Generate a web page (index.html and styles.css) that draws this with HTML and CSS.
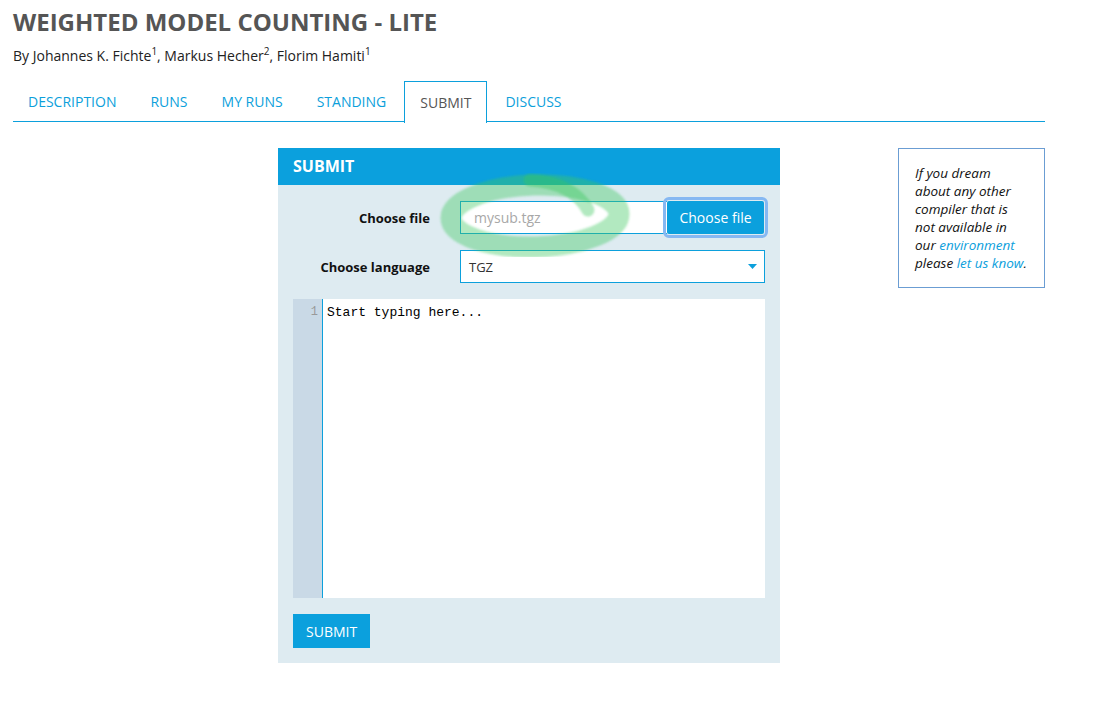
FILE: index.html
```html
<!DOCTYPE html>
<html>
<head>
<meta charset="utf-8">
<title>Weighted Model Counting - Lite</title>
<link rel="stylesheet" href="styles.css">
</head>
<body>
<div class="page">
  <h1 class="title">WEIGHTED MODEL COUNTING - LITE</h1>
  <p class="authors">By Johannes K. Fichte<sup>1</sup>, Markus Hecher<sup>2</sup>, Florim Hamiti<sup>1</sup></p>
  <nav class="tabs">
    <a class="tab">DESCRIPTION</a>
    <a class="tab">RUNS</a>
    <a class="tab">MY RUNS</a>
    <a class="tab">STANDING</a>
    <a class="tab active">SUBMIT</a>
    <a class="tab">DISCUSS</a>
  </nav>
  <div class="content">
    <section class="panel">
      <div class="panel-head">SUBMIT</div>
      <div class="panel-body">
        <div class="row">
          <label class="label">Choose file</label>
          <div class="file">
            <span class="file-name">mysub.tgz</span>
            <span class="file-btn">Choose file</span>
          </div>
        </div>
        <div class="row">
          <label class="label">Choose language</label>
          <div class="select">
            <span>TGZ</span>
            <svg class="caret" width="9" height="5" viewBox="0 0 9 5"><path d="M0 0H9L4.5 5Z" fill="#0ca0dc"/></svg>
          </div>
        </div>
        <div class="editor">
          <div class="gutter"><span>1</span></div>
          <div class="code">Start typing here...</div>
        </div>
        <div class="actions"><button class="submit">SUBMIT</button></div>
      </div>
      <svg class="marker" width="220" height="110" viewBox="0 0 220 110">
        <defs><filter id="soft" x="-10%" y="-10%" width="120%" height="120%"><feGaussianBlur stdDeviation="0.8"/></filter></defs>
        <g filter="url(#soft)" fill="none" stroke="rgb(60,200,95)" stroke-opacity="0.4">
          <ellipse cx="105" cy="56" rx="84" ry="31" stroke-width="21" transform="rotate(-1.5 105 56)"/>
          <path d="M100 20 C128 22 148 32 158 50" stroke-width="13" stroke-linecap="round"/>
        </g>
      </svg>
    </section>
    <aside class="note">
      <p><em>If you dream about any other compiler that is not available in our <a class="link">environment</a> please <a class="link">let us know</a>.</em></p>
    </aside>
  </div>
</div>
</body>
</html>
```

FILE: styles.css
```css
* { box-sizing: border-box; }
html, body { margin: 0; padding: 0; background: #fff; }
body {
  font-family: "Open Sans", "Liberation Sans", sans-serif;
  color: #222;
}
.page {
  width: 1032px;
  margin-left: 13px;
}
.title {
  margin: 0;
  padding-top: 8px;
  font-size: 24px;
  line-height: 28px;
  font-weight: 700;
  color: #555;
}
.authors {
  margin: 11px 0 0;
  font-size: 14px;
  line-height: 18px;
  color: #222;
}
.authors sup {
  font-size: 10px;
  line-height: 0;
  vertical-align: 6px;
}
.tabs {
  display: flex;
  margin-top: 15px;
  border-bottom: 1px solid #0ca0dc;
  height: 42px;
}
.tab {
  display: flex;
  align-items: center;
  height: 42px;
  padding: 0 15px;
  border: 1px solid transparent;
  border-bottom: none;
  margin-right: 2px;
  font-size: 14px;
  color: #0c9fdb;
  cursor: pointer;
}
.tab:first-child { margin-left: -1px; }
.tab.active {
  border-color: #0ca0dc;
  background: #fff;
  color: #555;
  height: 42px;
  position: relative;
  top: 1px;
}
.content {
  display: flex;
  align-items: flex-start;
  margin-top: 26px;
  padding-left: 265px;
}
.panel {
  position: relative;
  width: 502px;
  background: #deebf1;
}
.panel-head {
  height: 37px;
  background: #0ba0dd;
  color: #fff;
  font-weight: 700;
  font-size: 16px;
  line-height: 37px;
  padding-left: 15px;
}
.panel-body {
  padding: 16px 15px 15px;
  display: flex;
  flex-direction: column;
  gap: 16px;
}
.row {
  display: flex;
  align-items: center;
  height: 33px;
}
.label {
  width: 167px;
  padding-right: 30px;
  text-align: right;
  font-weight: 700;
  font-size: 13px;
  color: #111;
}
.file {
  display: flex;
  width: 304px;
  height: 33px;
}
.file-name {
  flex: 1;
  background: #fff;
  border: 1px solid #0ca0dc;
  border-right: none;
  padding-left: 13px;
  font-size: 14px;
  line-height: 31px;
  color: #a8a8a8;
}
.file-btn {
  width: 97px;
  height: 33px;
  background: #0ba0dd;
  color: #fff;
  font-size: 14px;
  line-height: 33px;
  text-align: center;
  outline: 3px solid #86b8f2;
  outline-offset: 1px;
  border-radius: 2px;
}
.select {
  display: flex;
  align-items: center;
  justify-content: space-between;
  width: 305px;
  height: 33px;
  background: #fff;
  border: 1px solid #0ca0dc;
  padding: 0 7px 0 8px;
  font-size: 13px;
  color: #333;
}
.caret { display: block; }
.editor {
  display: flex;
  width: 472px;
  height: 299px;
  background: #fff;
}
.gutter {
  width: 30px;
  background: #c9d9e6;
  border-right: 1px solid #0ca0dc;
  text-align: right;
  padding: 6px 4px 0 0;
  font-family: "Liberation Mono", monospace;
  font-size: 12px;
  line-height: 15px;
  color: #999;
}
.code {
  padding: 6px 0 0 4px;
  font-family: "Liberation Mono", monospace;
  font-size: 13px;
  line-height: 15px;
  color: #000;
}
.actions { display: flex; }
.submit {
  height: 34px;
  padding: 0 13px;
  border: none;
  border-radius: 0;
  background: #0ba0dd;
  color: #fff;
  font-family: "Open Sans", "Liberation Sans", sans-serif;
  font-size: 14px;
  cursor: pointer;
}
.marker {
  position: absolute;
  left: 152px;
  top: 12px;
  pointer-events: none;
}
.note {
  margin-left: auto;
  width: 147px;
  border: 1px solid #6b9dd3;
  padding: 15px 15px 15px 16px;
}
.note p {
  margin: 0;
  font-size: 13.5px;
  line-height: 18px;
  color: #111;
}
.link { color: #0ca0dc; }
```
